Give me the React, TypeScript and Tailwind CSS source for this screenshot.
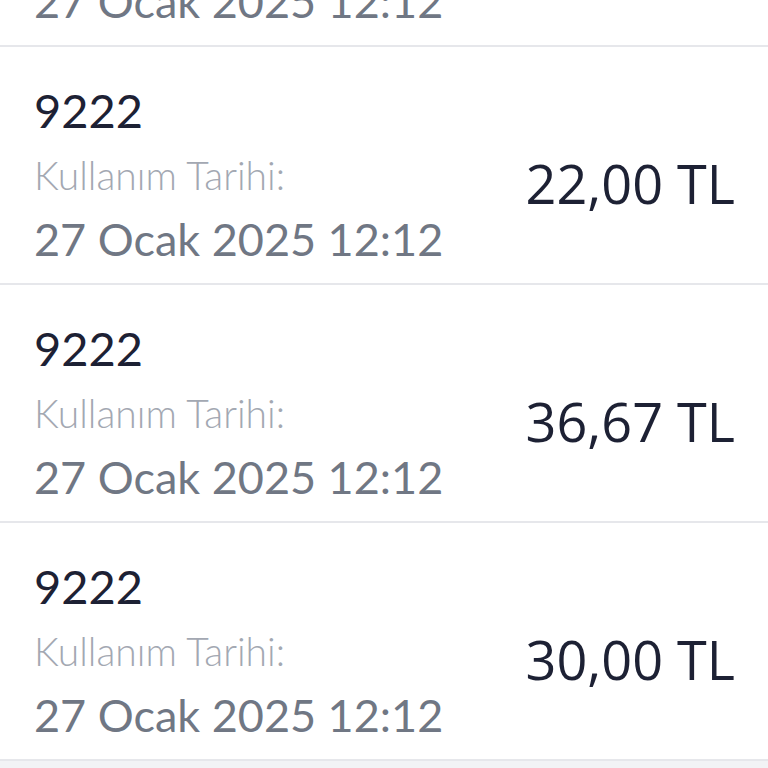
import React from 'react';

interface Usage {
  code: string;
  date: string;
  amount: string;
}

const usages: Usage[] = [
  { code: '9222', date: '27 Ocak 2025 12:12', amount: '18,33 TL' },
  { code: '9222', date: '27 Ocak 2025 12:12', amount: '22,00 TL' },
  { code: '9222', date: '27 Ocak 2025 12:12', amount: '36,67 TL' },
  { code: '9222', date: '27 Ocak 2025 12:12', amount: '30,00 TL' },
];

const UsageRow: React.FC<{ item: Usage; first?: boolean }> = ({ item, first }) => (
  <div
    className={`flex justify-between bg-white border-b-2 border-[#e6e7eb] h-[238px] pl-[34px] pr-[33px] ${first ? '-mt-[191px]' : ''}`}
  >
    <div className="flex flex-col pt-[40px] font-['Lato',sans-serif]">
      <span className="text-[47px] leading-none text-[#1d2134]">{item.code}</span>
      <span className="mt-[22px] text-[39px] leading-none font-light text-[#a3a8b2]">Kullanım Tarihi:</span>
      <span className="mt-[22px] text-[45px] leading-none text-[#707784]">{item.date}</span>
    </div>
    <div className="pt-[109px] font-['Open_Sans',sans-serif] text-[54px] leading-none font-medium text-[#1d2134] whitespace-nowrap">
      {item.amount}
    </div>
  </div>
);

export default function App() {
  return (
    <div className="w-[768px] h-[768px] overflow-hidden bg-[#f2f3f5]">
      {usages.map((u, i) => (
        <UsageRow key={i} item={u} first={i === 0} />
      ))}
    </div>
  );
}
